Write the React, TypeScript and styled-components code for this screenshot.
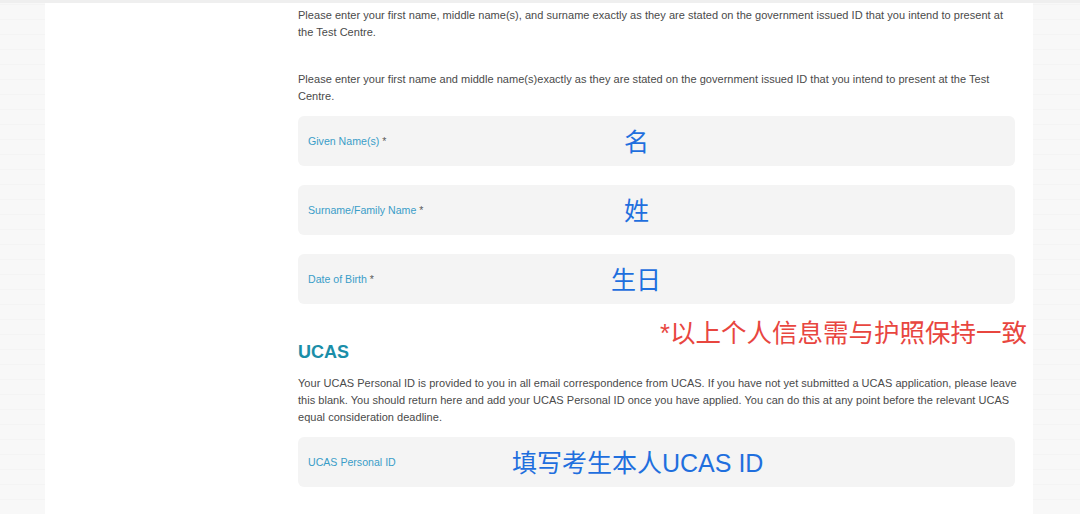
import styled, { createGlobalStyle } from "styled-components";

const GlobalStyle = createGlobalStyle`
  html, body {
    margin: 0;
    padding: 0;
    background: #ffffff;
  }
  body {
    font-family: "Liberation Sans", "Noto Sans CJK SC", Arial, sans-serif;
  }
`;

type Field = {
  label: string;
  required?: boolean;
  note: string;
  noteLeft: number;
};

const nameFields: Field[] = [
  { label: "Given Name(s)", required: true, note: "名", noteLeft: 326 },
  { label: "Surname/Family Name", required: true, note: "姓", noteLeft: 326 },
  { label: "Date of Birth", required: true, note: "生日", noteLeft: 313 },
];

export default function App() {
  return (
    <>
      <GlobalStyle />
      <Page>
        <Side />
        <Main>
          <Content>
            <Text>
              Please enter your first name, middle name(s), and surname exactly as they are stated on the
              government issued ID that you intend to present at
              <br />
              the Test Centre.
            </Text>
            <Text $gap={30}>
              Please enter your first name and middle name(s)exactly as they are stated on the government
              issued ID that you intend to present at the Test
              <br />
              Centre.
            </Text>

            <Fields>
              {nameFields.map((f) => (
                <FieldBox key={f.label}>
                  <Label>
                    {f.label}
                    {f.required && <Star> *</Star>}
                  </Label>
                  <Note style={{ left: f.noteLeft }}>{f.note}</Note>
                </FieldBox>
              ))}
            </Fields>

            <Section>
              <Warning>*以上个人信息需与护照保持一致</Warning>
              <Heading>UCAS</Heading>
            </Section>

            <Text $gap={12}>
              Your UCAS Personal ID is provided to you in all email correspondence from UCAS. If you have not
              yet submitted a UCAS application, please leave
              <br />
              this blank. You should return here and add your UCAS Personal ID once you have applied. You can
              do this at any point before the relevant UCAS
              <br />
              equal consideration deadline.
            </Text>

            <Fields $top={11}>
              <FieldBox>
                <Label>UCAS Personal ID</Label>
                <Note style={{ left: 214 }}>填写考生本人UCAS ID</Note>
              </FieldBox>
            </Fields>
          </Content>
        </Main>
        <Side $right />
      </Page>
    </>
  );
}

const Page = styled.div`
  display: flex;
  min-height: 514px;
  border-top: 3px solid #efefef;
  box-sizing: border-box;
`;

const Side = styled.div<{ $right?: boolean }>`
  width: ${(p) => (p.$right ? "47px" : "45px")};
  flex-shrink: 0;
  background: repeating-linear-gradient(
      0deg,
      #f8f8f8 0px,
      #f8f8f8 14px,
      #f4f4f4 14px,
      #f4f4f4 15px
    ),
    #f8f8f8;
`;

const Main = styled.div`
  flex: 1;
  padding: 4px 18px 0 253px;
  background: #ffffff;
`;

const Content = styled.div`
  width: 717px;
`;

const Text = styled.p<{ $gap?: number }>`
  margin: ${(p) => p.$gap ?? 0}px 0 0;
  font-size: 11px;
  line-height: 17px;
  letter-spacing: 0.03px;
  color: #4a4a4a;
  white-space: nowrap;
`;

const Fields = styled.div<{ $top?: number }>`
  display: flex;
  flex-direction: column;
  gap: 19px;
  margin-top: ${(p) => p.$top ?? 11}px;
`;

const FieldBox = styled.div`
  position: relative;
  display: flex;
  align-items: center;
  height: 50px;
  padding: 0 10px;
  background: #f4f4f4;
  border-radius: 6px;
`;

const Label = styled.span`
  font-size: 10.6px;
  margin-top: -1px;
  color: #3a9dc8;
`;

const Star = styled.span`
  color: #5a5a5a;
`;

const Note = styled.span`
  position: absolute;
  top: 50%;
  transform: translateY(-44%);
  font-family: "Liberation Sans", "Noto Sans CJK SC", sans-serif;
  font-size: 25px;
  line-height: 1;
  color: #1f6fde;
  white-space: nowrap;
`;

const Section = styled.div`
  position: relative;
  margin-top: 37px;
`;

const Heading = styled.h2`
  margin: 0;
  font-size: 18px;
  line-height: 22px;
  font-weight: 700;
  color: #1a8ea8;
`;

const Warning = styled.span`
  position: absolute;
  right: -12px;
  top: -20px;
  font-family: "Liberation Sans", "Noto Sans CJK SC", sans-serif;
  font-size: 25.5px;
  line-height: 1;
  color: #e8463f;
  white-space: nowrap;
`;
